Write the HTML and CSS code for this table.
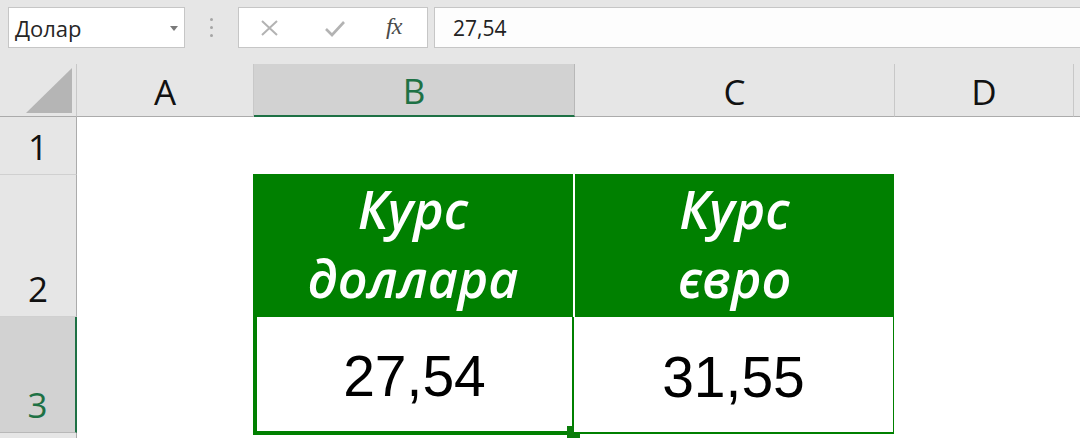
FILE: index.html
```html
<!DOCTYPE html>
<html lang="uk">
<head>
<meta charset="utf-8">
<title>Excel</title>
<link rel="stylesheet" href="styles.css">
</head>
<body>
<div class="topbar">
  <div class="namebox">
    <span class="name">Долар</span>
    <svg class="dd" width="8" height="5" viewBox="0 0 8 5"><path d="M0 0 H8 L4 5 Z" fill="#7a7a7a"/></svg>
  </div>
  <div class="grip"><i></i><i></i><i></i></div>
  <div class="fbuttons">
    <svg class="ic" width="20" height="18" viewBox="0 0 20 18"><path d="M2 2 L17 16 M17 2 L2 16" stroke="#b3b3b3" stroke-width="2" fill="none"/></svg>
    <svg class="ic" width="22" height="18" viewBox="0 0 22 18"><path d="M2 10 L8 16 L20 3" stroke="#b3b3b3" stroke-width="2.6" fill="none"/></svg>
    <span class="fx">fx</span>
  </div>
  <div class="fbox">27,54</div>
</div>
<div class="sheet">
  <div class="corner"><svg width="46" height="45" viewBox="0 0 46 45"><path d="M46 0 V45 H0 Z" fill="#b5b5b5"/></svg></div>
  <div class="ch">A</div>
  <div class="ch sel">B</div>
  <div class="ch">C</div>
  <div class="ch">D</div>
  <div class="ch last"></div>

  <div class="rh">1</div>
  <div class="cell"></div><div class="cell"></div><div class="cell"></div><div class="cell"></div><div class="cell"></div>

  <div class="rh">2</div>
  <div class="cell"></div>
  <div class="hdr hb">Курс<br>доллара</div>
  <div class="hdr hc">Курс<br>євро</div>
  <div class="cell"></div><div class="cell"></div>

  <div class="rh rsel">3</div>
  <div class="cell"></div>
  <div class="val vb">27,54<span class="handle"></span></div>
  <div class="val vc">31,55</div>
  <div class="cell"></div><div class="cell"></div>

  <div class="rh"></div>
  <div class="cell"></div><div class="cell"></div><div class="cell"></div><div class="cell"></div><div class="cell"></div>
</div>
</body>
</html>
```

FILE: styles.css
```css
* { box-sizing: border-box; }
html, body { margin: 0; padding: 0; }
body {
  width: 1080px;
  height: 438px;
  overflow: hidden;
  background: #ffffff;
  font-family: "Open Sans", "Noto Sans", sans-serif;
}

/* ---------- formula bar ---------- */
.topbar {
  height: 64px;
  background: #e6e6e6;
  display: flex;
  align-items: flex-start;
  padding: 7px 0 0 8px;
}
.namebox {
  width: 177px;
  height: 41px;
  background: #fff;
  border: 1px solid #c6c6c6;
  display: flex;
  align-items: center;
  justify-content: space-between;
  padding: 0 6px 0 6px;
}
.name {
  font-size: 22px;
  color: #262626;
}
.dd { margin-top: 1px; }
.grip {
  width: 53px;
  height: 41px;
  display: flex;
  flex-direction: column;
  align-items: center;
  justify-content: center;
  gap: 5px;
}
.grip i {
  display: block;
  width: 3px;
  height: 3px;
  border-radius: 50%;
  background: #a5a5a5;
}
.fbuttons {
  width: 190px;
  height: 41px;
  background: #fff;
  border: 1px solid #c6c6c6;
  display: flex;
  align-items: center;
  padding-left: 21px;
  gap: 44px;
}
.fx {
  font-family: "Liberation Serif", "DejaVu Serif", serif;
  font-style: italic;
  font-size: 24px;
  color: #4a4a4a;
  margin-left: -4px;
  letter-spacing: -1px;
  margin-top: -2px;
}
.fbox {
  flex: 1;
  height: 41px;
  margin-left: 6px;
  background: #fdfdfd;
  border: 1px solid #c6c6c6;
  border-right: none;
  display: flex;
  align-items: center;
  padding-left: 18px;
  font-size: 21px;
  color: #222;
}

/* ---------- sheet ---------- */
.sheet {
  display: grid;
  grid-template-columns: 77px 177px 321px 320px 179px 1fr;
  grid-template-rows: 53px 58px 142px 116px 1fr;
  height: 374px;
}
.corner {
  background: #e6e6e6;
  border-right: 1px solid #c8c8c8;
  border-bottom: 1px solid #ababab;
  display: flex;
  align-items: flex-start;
  justify-content: flex-end;
  padding: 4px 4px 0 0;
}
.ch {
  background: #e6e6e6;
  border-right: 1px solid #c8c8c8;
  border-bottom: 1px solid #ababab;
  display: flex;
  align-items: center;
  justify-content: center;
  font-size: 35px;
  color: #111;
  padding-top: 2px;
}
.ch.sel {
  background: #d2d2d2;
  color: #1e7145;
  border-bottom: 2px solid #1e7145;
  border-right-color: #b8b8b8;
}
.ch.last { border-right: none; }

.rh {
  background: #e6e6e6;
  border-right: 1px solid #ababab;
  border-bottom: 1px solid #d0d0d0;
  display: flex;
  align-items: flex-end;
  justify-content: center;
  font-size: 35px;
  line-height: 35px;
  color: #111;
  padding-bottom: 10px;
}
.rh.rsel {
  background: #d2d2d2;
  color: #1e7145;
  border-right: 2px solid #1e7145;
  border-bottom-color: #b8b8b8;
}
.cell { background: #fff; }

/* ---------- table ---------- */
.hdr {
  background: #008000;
  color: #fff;
  font-style: italic;
  font-weight: 600;
  font-size: 52px;
  line-height: 69px;
  text-align: center;
  padding-top: 0;
  margin-top: -1px;
}
.hb { margin-left: -1px; margin-right: 2px; }
.hc { margin-right: 1px; }

.val {
  position: relative;
  background: #fff;
  font-family: "Liberation Sans", Arial, sans-serif;
  font-size: 57px;
  color: #000;
  display: flex;
  align-items: center;
  justify-content: center;
  padding-top: 4px;
}
.vb {
  margin-left: -1px;
  border-left: 4px solid #008000;
  border-right: 3px solid #008000;
  border-bottom: 4px solid #008000;
  margin-bottom: -2px;
}
.vc {
  margin-left: -1px;
  margin-right: 1px;
  border-right: 1px solid #008000;
  border-bottom: 2px solid #008000;
  margin-bottom: -1px;
}
.handle {
  position: absolute;
  right: -8px;
  bottom: -7px;
  width: 13px;
  height: 12px;
  background: #0a7d0a;
}
```
